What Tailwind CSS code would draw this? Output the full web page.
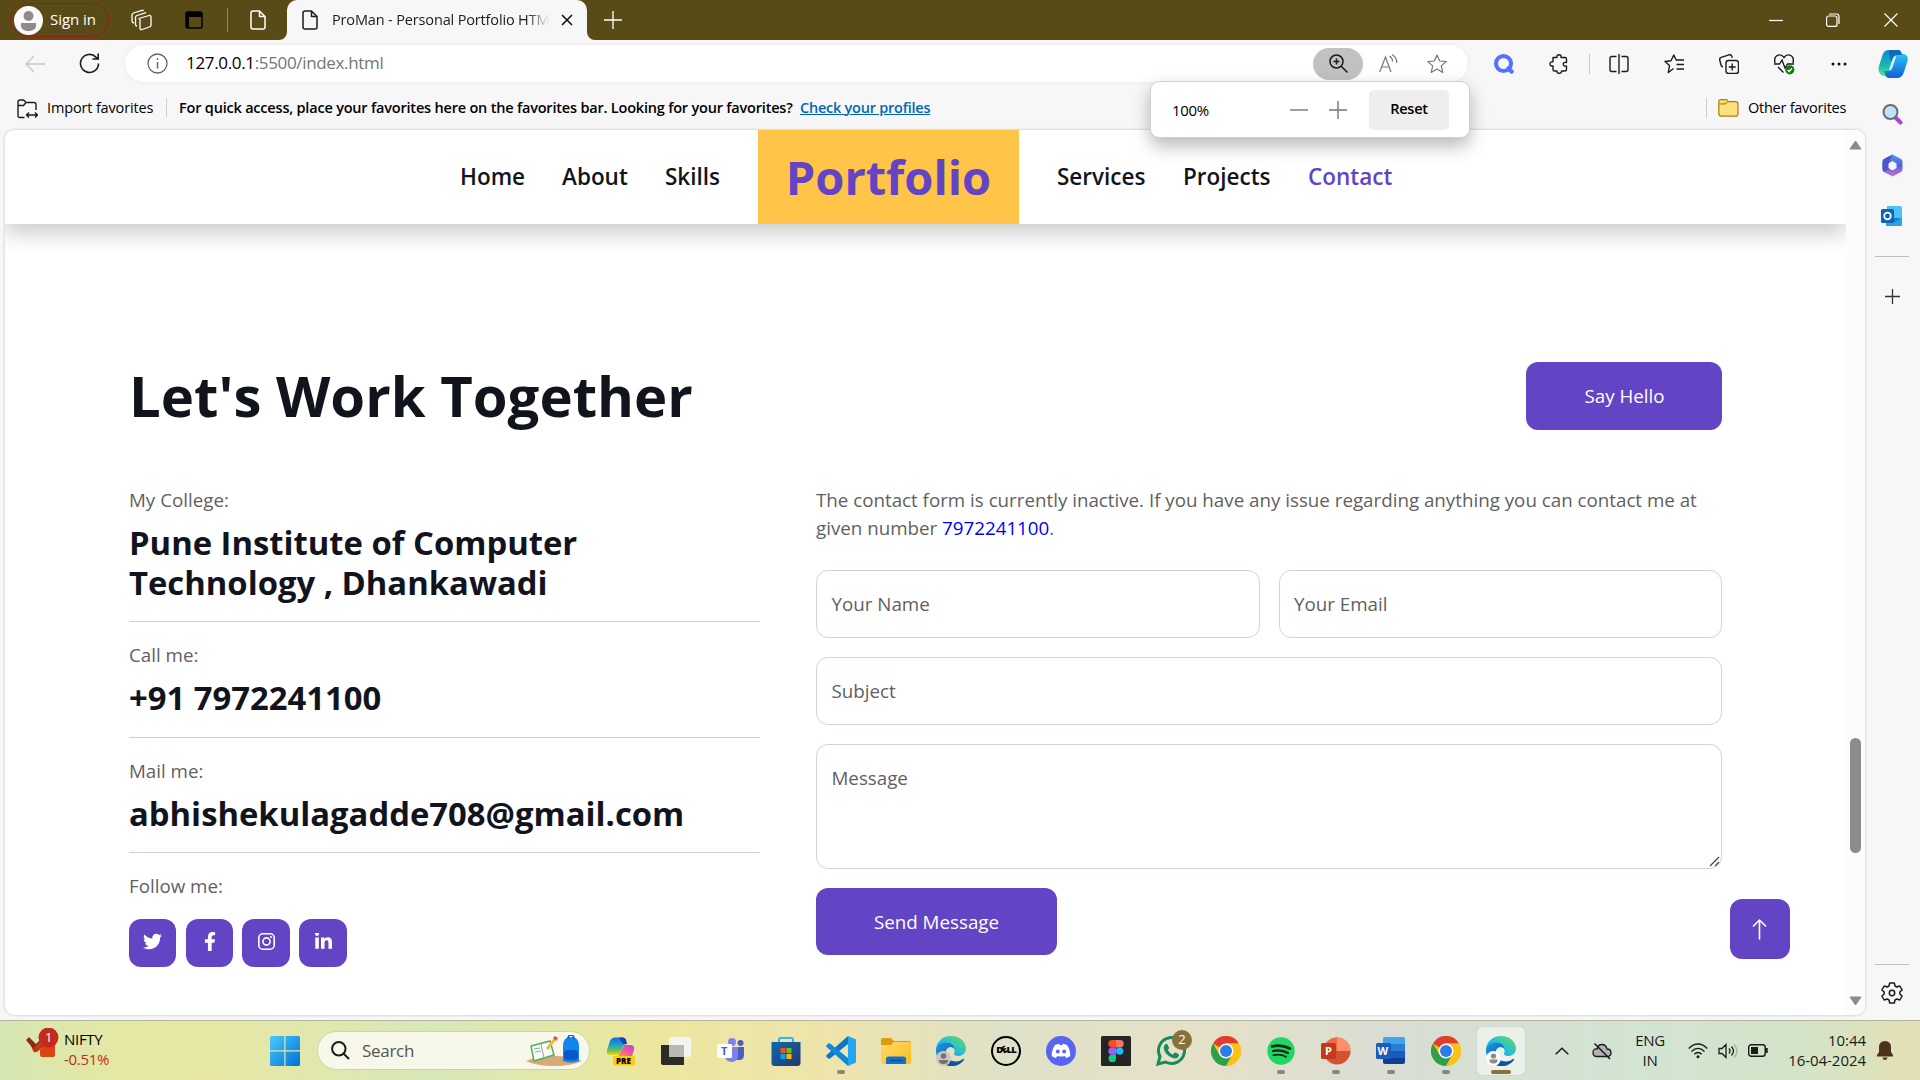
<!DOCTYPE html>
<html lang="en">
<head>
<meta charset="utf-8">
<title>ProMan - Personal Portfolio</title>
<script src="https://cdn.jsdelivr.net/npm/@tailwindcss/browser@4"></script>
</head>
<body class="h-[1080px] w-[1920px] overflow-hidden bg-[#f7f7f7] font-['Open_Sans','Noto_Sans',sans-serif] text-black">
<svg class="absolute size-0">
  <defs>
    <linearGradient id="win" x1="0" y1="0" x2="30" y2="30" gradientUnits="userSpaceOnUse"><stop offset="0" stop-color="#46ccfb"/><stop offset="1" stop-color="#0070d6"/></linearGradient>
    <linearGradient id="pilotA" x1="0" y1="0" x2="0" y2="1"><stop offset="0" stop-color="#1769dc"/><stop offset=".45" stop-color="#1ba6c4"/><stop offset=".75" stop-color="#72c34a"/><stop offset="1" stop-color="#f0d51f"/></linearGradient>
    <linearGradient id="pilotB" x1="1" y1="0" x2="0" y2="1"><stop offset="0" stop-color="#a24bf0"/><stop offset=".5" stop-color="#f0589a"/><stop offset="1" stop-color="#ff9a4c"/></linearGradient>
    <linearGradient id="copA" x1="0" y1="0" x2="0" y2="1"><stop offset="0" stop-color="#1686cf"/><stop offset=".6" stop-color="#16b9b4"/><stop offset="1" stop-color="#5ce08a"/></linearGradient>
    <linearGradient id="copB" x1="0" y1="0" x2="0" y2="1"><stop offset="0" stop-color="#27c3f5"/><stop offset="1" stop-color="#1260d8"/></linearGradient>
    <linearGradient id="edgeTop" x1="0" y1="1" x2="1" y2="0"><stop offset="0" stop-color="#1390dd"/><stop offset=".5" stop-color="#28bfd8"/><stop offset="1" stop-color="#63e04c"/></linearGradient>
    <linearGradient id="edgeLow" x1="0" y1="0" x2="1" y2="1"><stop offset="0" stop-color="#1b9be2"/><stop offset="1" stop-color="#0c4c9c"/></linearGradient>
    <linearGradient id="store" x1="0" y1="0" x2="1" y2="1"><stop offset="0" stop-color="#0d69b4"/><stop offset="1" stop-color="#243a68"/></linearGradient>
    <linearGradient id="folder" x1="0" y1="0" x2="1" y2="1"><stop offset="0" stop-color="#ffdc6b"/><stop offset="1" stop-color="#fbbb1c"/></linearGradient>
    <linearGradient id="m365" x1="0" y1="0" x2="0" y2="1"><stop offset="0" stop-color="#4a9df0"/><stop offset=".5" stop-color="#5a5fd8"/><stop offset="1" stop-color="#c278d8"/></linearGradient>
    <symbol id="chrome" viewBox="0 0 30 30">
      <circle cx="15" cy="15" r="15" fill="#fbc116"/>
      <path d="M15 15 2 7.5A15 15 0 0 1 28 7.5H15z" fill="#e33b2e"/>
      <path d="M2 7.5A15 15 0 0 0 15 30l6.500-11.200L15 15 8.500 18.800z" fill="#2da04e"/>
      <path d="M28 7.500H15v7.500l6.500 3.800L15 30A15 15 0 0 0 28 7.500z" fill="#fbc116"/>
      <circle cx="15" cy="15" r="7.500" fill="#fff"/><circle cx="15" cy="15" r="6" fill="#2d7bea"/>
    </symbol>
    <symbol id="edge" viewBox="0 0 30 30">
      <path d="M0 15C0 6 6.500 0 15 0c9 0 15 6 15 12.500C30 17 26.500 20 22.500 20c-3.500 0-5-1.500-4.200-3.200.8-1.700.5-5.800-4.300-5.800C8 11 0 17 0 15z" fill="url(#edgeTop)"/>
      <path d="M.1 13.500C1 9.500 5 6.500 10 6.500c5 0 8.500 3 8.500 7 0-1.500-2-3-4.500-2.500-4 .9-6 6-3.500 11 2 4 6.500 6 10 7A15 15 0 0 1 .1 13.500z" fill="url(#edgeLow)"/>
      <path d="M10 15c-1 6 3.500 10.500 10 10.500 3 0 5.500-1.500 7-2.500.8-.5 1.300.2.900.9C25.500 27.600 20.500 30 15.500 30 7 29 5 20 10 15z" fill="#0f549f"/>
    </symbol>
    <symbol id="page" viewBox="0 0 16 20"><path d="M3 1h6.500L15 6.500V17a2 2 0 0 1-2 2H3a2 2 0 0 1-2-2V3a2 2 0 0 1 2-2zM9.500 1v5.500H15" fill="none" stroke="currentColor" stroke-width="1.500" stroke-linejoin="round"/></symbol>
  </defs>
</svg>

<!-- Title bar -->
<header class="flex h-10 items-center bg-[#594b18] text-white">
  <div class="ml-2.5 flex h-[34px] w-[99px] items-center gap-[7px] rounded-full border border-[#9c1b12] pl-[3px] text-[15px]">
    <svg class="size-[29px] shrink-0" viewBox="0 0 29 29"><circle cx="14.500" cy="14.500" r="14.500" fill="#fafafa"/><circle cx="14.500" cy="10" r="5" fill="#8d8c8b"/><path d="M7 17h15c1 6-3 8-7.500 8S6 23 7 17z" fill="#8d8c8b"/></svg>
    <span class="-mt-px whitespace-nowrap tracking-[-0.05px]">Sign in</span>
  </div>
  <svg class="ml-[22px] size-[22px]" viewBox="0 0 22 22" fill="none" stroke="#fff" stroke-width="1.300" stroke-linejoin="round"><path d="M8 9.500 18 6.500q2-.4 2 1.500v8q0 1.500-1.500 2L11 20.500q-2 .5-2-1.500v-8zM6 17q-1.500 0-1.500-2V8.500q0-1.500 1.500-2l9-2.800M3 14q-2-.5-2-2V6q0-1.500 1.500-2L11 1.300q1-.2 1.500.5"/></svg>
  <svg class="ml-[32px] h-[18px] w-[18px]" viewBox="0 0 18 18"><rect x="1" y="1" width="16" height="16" rx="2" fill="none" stroke="#000" stroke-width="1.500"/><path d="M1 1h16v5H1zM1 1h3v16H1z" fill="#000"/></svg>
  <div class="ml-6 h-6 w-px bg-[#94895f]"></div>
  <svg class="ml-[22px] h-5 w-4" viewBox="0 0 16 20"><use href="#page"/></svg>
  <div class="relative ml-[21px] flex h-10 w-[300px] items-center rounded-t-[10px] bg-[#f7f7f7] pl-[15px] text-[14.500px] text-[#1b1b1b]">
    <svg class="h-5 w-4" viewBox="0 0 16 20"><use href="#page"/></svg>
    <span class="-mt-px ml-[14px] w-[217px] overflow-hidden bg-linear-to-r from-[#1b1b1b] from-[90%] to-transparent bg-clip-text whitespace-nowrap tracking-[-0.15px] text-transparent">ProMan - Personal Portfolio HTML</span>
    <svg class="ml-[12px] size-3" viewBox="0 0 12 12" stroke="#111" stroke-width="1.600"><path d="m1 1 10 10M11 1 1 11"/></svg>
    <svg class="absolute bottom-0 -left-2 size-2" viewBox="0 0 8 8"><path d="M8 0v8H0a8 8 0 0 0 8-8" fill="#f7f7f7"/></svg>
    <svg class="absolute -right-2 bottom-0 size-2" viewBox="0 0 8 8"><path d="M0 0v8h8a8 8 0 0 1-8-8" fill="#f7f7f7"/></svg>
  </div>
  <svg class="ml-[17px] size-[18px]" viewBox="0 0 18 18" stroke="#fff" stroke-width="1.300"><path d="M9 0v18M0 9h18"/></svg>
  <div class="ml-auto flex items-center pr-[22px]">
    <svg class="size-[14px]" viewBox="0 0 14 14" stroke="#fff" stroke-width="1.200"><path d="M0 7.500h14"/></svg>
    <svg class="ml-[43px] size-[14px]" viewBox="0 0 14 14" fill="none" stroke="#fff" stroke-width="1.200"><rect x=".6" y="3" width="10.400" height="10.400" rx="2"/><path d="M3 1h7.500Q13 1 13 3.500V11"/></svg>
    <svg class="ml-[44px] size-[14px]" viewBox="0 0 14 14" stroke="#fff" stroke-width="1.200"><path d="m.5.500 13 13M13.500.500l-13 13"/></svg>
  </div>
</header>

<div class="flex h-[980px]">
  <div class="flex w-[1866px] flex-col">
    <!-- Address row -->
    <div class="flex h-[47px] items-center">
      <svg class="ml-[25px] h-[18px] w-5" viewBox="0 0 20 18" fill="none" stroke="#c9c9c9" stroke-width="1.400"><path d="M20 9H1M9 1 1 9l8 8"/></svg>
      <svg class="ml-[34px] size-[21px]" viewBox="0 0 21 21" fill="none" stroke="#1b1b1b" stroke-width="1.600"><path d="M19.500 10.500a9 9 0 1 1-2.600-6.400L19 6M19.200.500V6H13.500"/></svg>
      <div class="ml-[25px] flex h-[37px] w-[1343px] items-center rounded-full bg-white pl-[22px] shadow-[0_0_4px_rgba(0,0,0,0.07)]">
        <svg class="size-[21px]" viewBox="0 0 21 21" fill="none" stroke="#666" stroke-width="1.300"><circle cx="10.500" cy="10.500" r="9.500"/><path d="M10.500 9v6.500M10.500 5.200v1.800" stroke-width="1.500"/></svg>
        <span class="-mt-px ml-[18px] w-[500px] text-[17px] tracking-[-0.34px] text-[#757575]"><span class="text-black">127.0.0.1</span>:5500/index.html</span>
        <div class="mr-[21px] ml-auto flex items-center">
          <div class="flex h-8 w-[50px] items-center justify-center rounded-full bg-[#c1c1c1]"><svg class="size-[19px]" viewBox="0 0 19 19" fill="none" stroke="#1b1b1b" stroke-width="1.500"><circle cx="7.500" cy="7.500" r="6.500"/><path d="m12 12 6.500 6.500M4.500 7.500h6M7.500 4.500v6"/></svg></div>
          <svg class="ml-4 h-[19px] w-[19px]" viewBox="0 0 19 19" fill="none" stroke="#767676" stroke-width="1.200"><path d="m.7 18 5.800-15L12 18M2.700 13H10M10.500 2q3 2 3 5.500M13 .5q5 3 4.800 8.500"/></svg>
          <svg class="ml-[29px] size-5" viewBox="0 0 20 20" fill="none" stroke="#767676" stroke-width="1.200" stroke-linejoin="round"><path d="m10 1 2.700 6 6.500.6-4.900 4.300 1.500 6.500L10 15l-5.800 3.400 1.500-6.500L.8 7.600l6.500-.6z"/></svg>
        </div>
      </div>
      <svg class="ml-[26px] size-5" viewBox="0 0 20 20" fill="none" stroke="#5271ff"><circle cx="9.500" cy="9.500" r="7.500" stroke-width="4"/><path d="m14.500 14.500 3 3" stroke-width="4.500" stroke-linecap="round"/></svg>
      <svg class="ml-[35px] size-5" viewBox="0 0 20 20" fill="none" stroke="#1b1b1b" stroke-width="1.400" stroke-linejoin="round"><path d="M4 3.500h4Q7.500.8 10 .8t2 2.700h4q1.500 0 1.500 1.500v3.500q-3.200-.6-3.200 1.700T17.500 12v3.500q0 1.500-1.500 1.500h-3.500q.2 2.300-2.300 2.300T8 17H5.500Q4 17 4 15.500V12q-3 .3-3-2t3-2.200z"/></svg>
      <div class="ml-[20px] h-5 w-px bg-[#c8c8c8]"></div>
      <svg class="ml-[19px] h-5 w-5" viewBox="0 0 20 20" fill="none" stroke="#1b1b1b" stroke-width="1.400"><path d="M10 0v20M7.500 2.500H3q-2 0-2 2v11q0 2 2 2h4.500M12.500 2.500H17q2 0 2 2v11q0 2-2 2h-4.500"/></svg>
      <svg class="ml-[35px] h-5 w-5" viewBox="0 0 20 20" fill="none" stroke="#1b1b1b" stroke-width="1.400" stroke-linejoin="round"><path d="M9.500 14.500 4.300 18.500l1.200-7L1 7.500l6-.7L9.800 1l2.300 5H20M12.500 10.500H20M12.500 15H20"/></svg>
      <svg class="ml-[35px] size-5" viewBox="0 0 20 20" fill="none" stroke="#1b1b1b" stroke-width="1.400" stroke-linejoin="round"><rect x="7" y="6.500" width="12.500" height="13" rx="2.500"/><path d="M13.200 9.500v7M9.700 13h7M4 13Q2.300 12.500 2 11L.7 6q-.3-2 1.500-2.600L10 .8q2-.5 2.700 1.200l.6 1.800"/></svg>
      <svg class="ml-[35px] size-5 overflow-visible" viewBox="0 0 20 20" fill="none" stroke="#1b1b1b" stroke-width="1.400"><path d="M1 9Q-.5 3 4 1.200 7.500 0 10 3.500 12.500 0 16 1.200 20.500 3 19 9M0 10h5.500L8 6l3 8 2.500-4H20M4 13l5.500 5.500"/><circle cx="15.800" cy="15.800" r="4.600" fill="#107c10" stroke="none"/><path d="m13.700 16 1.500 1.500 2.700-3" stroke="#fff"/></svg>
      <svg class="ml-[37px] h-1 w-4" viewBox="0 0 16 4" fill="#111"><circle cx="2" cy="2" r="1.500"/><circle cx="8" cy="2" r="1.500"/><circle cx="14" cy="2" r="1.500"/></svg>
    </div>
    <!-- Favorites bar -->
    <div class="flex h-[43px] items-center pb-[2px] text-[14.500px]">
      <svg class="mt-0.5 ml-[17px] h-[20px] w-[21px]" viewBox="0 0 21 20" fill="none" stroke="#1b1b1b" stroke-width="1.400"><path d="M7.500 18.500H3q-2 0-2-2V3q0-2 2-2h3.500l2.500 2.500H17q2 0 2 2V11M1 6.500h5.500L9 3.500M9.500 16h11M12 13.500 9.500 16l2.500 2.500M18 13.500l2.500 2.500-2.500 2.500"/></svg>
      <span class="ml-[9px] w-[119px] whitespace-nowrap tracking-[-0.15px]">Import favorites</span>
      <div class="mr-[12px] h-[19px] w-px bg-[#cfcfcf]"></div>
      <span class="w-[621px] text-[14.500px] font-semibold whitespace-nowrap tracking-[-0.2px]">For quick access, place your favorites here on the favorites bar. Looking for your favorites?</span>
      <span class="whitespace-nowrap tracking-[-0.24px] font-semibold text-[#0067b8] underline">Check your profiles</span>
      <div class="mr-[19px] ml-auto flex items-center">
        <div class="h-5 w-px bg-[#cfcfcf]"></div>
        <svg class="ml-[11px] h-[18px] w-[21px]" viewBox="0 0 21 18"><path d="M3 .7h5q1.500 0 2 1.500l.3.500H17.500q2.500 0 2.500 2.500v9.500q0 2.500-2.500 2.500h-14Q.8 17.200.8 14.500V3Q.8.700 3 .7z" fill="#ffdf7f" stroke="#a9801b" stroke-width="1.200"/><path d="M1 5h6.500L10 2.500" fill="#f0bd2c" stroke="#a9801b"/></svg>
        <span class="ml-[9px] w-[99px] whitespace-nowrap tracking-[-0.25px]">Other favorites</span>
      </div>
    </div>

    <!-- Page viewport -->
    <div class="ml-[5px] flex h-[885px] w-[1860px] overflow-hidden rounded-[9px] bg-white shadow-[0_0_3px_rgba(0,0,0,0.25)]">
      <main class="relative h-full w-[1841px] overflow-hidden">
        <nav class="flex h-[94px] items-center bg-white text-[22.500px] font-semibold text-[#12141d] shadow-[0_10px_20px_rgba(0,0,0,0.2)]">
          <a class="ml-[454px] w-[103px] pl-px">Home</a><a class="w-[103px]">About</a><a class="w-[93px]">Skills</a>
          <a class="flex h-full w-[261px] items-center justify-center bg-[#ffc448] text-[47px] font-bold text-[#6244c5]">Portfolio</a>
          <a class="ml-[38px] w-[126px]">Services</a><a class="w-[125px]">Projects</a><a class="text-[#6244c5]">Contact</a>
        </nav>
        <section class="pt-[138px] pr-[124px] pl-[124px] text-[18.750px] text-[#5f5f63]">
          <div class="flex h-[68px] items-center justify-between">
            <h2 class="-mt-[2px] text-[56.250px] leading-[68px] font-bold text-[#12141d]">Let's Work Together</h2>
            <a class="flex h-full w-[196px] items-center justify-center rounded-[12px] bg-[#6244c5] pl-px font-medium text-white">Say Hello</a>
          </div>
          <div class="mt-[56px] flex justify-between leading-7">
            <div class="w-[631px]">
              <div class="h-[136px] border-b border-[#cfd0d6]"><p>My College:</p><h3 class="mt-[9px] text-[32.800px] leading-10 font-bold text-[#12141d]">Pune Institute of Computer<br>Technology , Dhankawadi</h3></div>
              <div class="h-[116px] border-b border-[#cfd0d6] pt-[19px]"><p>Call me:</p><h3 class="mt-[9px] text-[32.800px] leading-10 font-bold text-[#12141d]">+91 7972241100</h3></div>
              <div class="h-[115px] border-b border-[#cfd0d6] pt-[19px]"><p>Mail me:</p><h3 class="mt-[9px] text-[32.800px] leading-10 font-bold text-[#12141d]">abhishekulagadde708@gmail.com</h3></div>
              <p class="pt-[19px]">Follow me:</p>
              <div class="mt-[19px] flex gap-[9px] text-white">
                <a class="flex h-12 w-[47px] items-center justify-center rounded-[12px] bg-[#6244c5] pb-[3px]"><svg class="size-[19px]" viewBox="0 0 512 512" fill="currentColor"><path d="M459.400 151.700c.3 4.500.3 9.100.3 13.600 0 138.700-105.600 298.600-298.600 298.600-59.500 0-114.700-17.200-161.100-47.100 8.400 1 16.600 1.300 25.300 1.300 49.100 0 94.200-16.600 130.300-44.800-46.100-1-84.800-31.200-98.100-72.800 6.500 1 13 1.600 19.800 1.600 9.400 0 18.800-1.300 27.600-3.600-48.100-9.700-84.100-52-84.100-103v-1.300c14 7.800 30.200 12.700 47.400 13.300-28.300-18.800-46.800-51-46.800-87.400 0-19.500 5.200-37.400 14.300-53 51.700 63.700 129.300 105.300 216.400 109.800-1.600-7.800-2.600-15.900-2.600-24 0-57.800 46.800-104.900 104.900-104.900 30.200 0 57.500 12.700 76.700 33.100 23.700-4.500 46.500-13.300 66.600-25.300-7.800 24.400-24.400 44.800-46.100 57.800 21.100-2.300 41.600-8.100 60.400-16.200-14.300 20.800-32.200 39.300-52.600 54.300z"/></svg></a>
                <a class="ml-px flex h-12 w-[47px] items-center justify-center rounded-[12px] bg-[#6244c5] pb-[3px]"><svg class="h-[19px] w-[12px]" viewBox="0 0 320 512" fill="currentColor"><path d="m279 288 14.300-92.700h-89v-60c0-25.400 12.400-50.200 52.200-50.200H297V6.300S260.400 0 225.400 0C152 0 104.300 44.400 104.300 124.700v70.600H22.900V288h81.400v224h100.100V288z"/></svg></a>
                <a class="flex h-12 w-12 items-center justify-center rounded-[12px] bg-[#6244c5] pb-[3px]"><svg class="size-[17px]" viewBox="0 0 17 17" fill="none" stroke="currentColor" stroke-width="1.600"><rect x=".8" y=".8" width="15.400" height="15.400" rx="4"/><circle cx="8.500" cy="8.500" r="3.600"/><circle cx="13" cy="4" r="1" fill="currentColor" stroke="none"/></svg></a>
                <a class="flex h-12 w-12 items-center justify-center rounded-[12px] bg-[#6244c5] pb-[3px]"><svg class="size-[17px]" viewBox="0 0 448 448" fill="currentColor"><path d="M100.300 416H7.400V116.900h92.900zM53.800 76.100C24.100 76.100 0 51.500 0 21.800a53.800 53.800 0 0 1 107.600 0c0 29.700-24.100 54.300-53.800 54.300zM447.900 416h-92.700V270.400c0-34.700-.7-79.200-48.300-79.200-48.300 0-55.700 37.700-55.700 76.700V416h-92.800V116.900h89.100v40.800h1.300c12.400-23.500 42.700-48.300 87.900-48.300 94 0 111.300 61.900 111.300 142.300V416z"/></svg></a>
              </div>
            </div>
            <div class="w-[906px]">
              <p class="whitespace-nowrap">The contact form is currently inactive. If you have any issue regarding anything you can contact me at<br>given number <a class="text-[#0000ee]">7972241100</a>.</p>
              <div class="mt-[28px] grid grid-cols-2 gap-x-[19px] gap-y-[19px]">
                <div class="flex h-[68px] items-center rounded-[12px] border border-[#cfd3dc] px-[14.500px]">Your Name</div>
                <div class="flex h-[68px] items-center rounded-[12px] border border-[#cfd3dc] px-[14.500px]">Your Email</div>
                <div class="col-span-2 flex h-[68px] items-center rounded-[12px] border border-[#cfd3dc] px-[14.500px]">Subject</div>
                <div class="relative col-span-2 h-[125px] rounded-[12px] border border-[#cfd3dc] px-[14.500px] pt-[19px]">Message<svg class="absolute right-px bottom-px size-[11px]" viewBox="0 0 11 11" stroke="#444" stroke-width="1.200"><path d="m1 10 9-9M6 10l4-4"/></svg></div>
              </div>
              <a class="mt-[19px] flex h-[67px] w-[241px] items-center justify-center rounded-[12px] bg-[#6244c5] font-medium text-white">Send Message</a>
            </div>
          </div>
        </section>
        <a class="absolute top-[769px] left-[1725px] flex size-[60px] items-center justify-center rounded-[12px] bg-[#6244c5] pr-px"><svg class="h-[21px] w-[15px]" viewBox="0 0 15 21" fill="none" stroke="#fff" stroke-width="1.600" stroke-linecap="round" stroke-linejoin="round"><path d="M7.500 20V1M1.500 7l6-6 6 6"/></svg></a>
      </main>
      <div class="flex w-[19px] flex-col items-center bg-[#fcfcfc] pt-[10px] pr-px pb-[9px]">
        <svg class="h-[10px] w-[13px]" viewBox="0 0 13 10"><path d="M6.500 1 12 9H1z" fill="#8b8b8b" stroke="#8b8b8b" stroke-linejoin="round"/></svg>
        <div class="mt-[588px] h-[115px] w-[11px] rounded-full bg-[#8b8b8b]"></div>
        <svg class="mt-auto h-[10px] w-[13px]" viewBox="0 0 13 10"><path d="M6.500 9 12 1H1z" fill="#8b8b8b" stroke="#8b8b8b" stroke-linejoin="round"/></svg>
      </div>
    </div>
  </div>

  <!-- Edge sidebar -->
  <aside class="flex w-[54px] flex-col items-center pt-[9px] pr-[2px]">
    <svg class="ml-[2px] size-[30px]" viewBox="0 0 30 30"><path d="M11 1h9q2.500 0 3.500 3l1 4h-5q-3 0-4 3l-4 13q-1 3-4 3H5Q-1 24 1 17L4.500 6Q6 1 11 1z" fill="url(#copA)"/><path d="M19 29h-8q-3 0-4-4l-.7-3H9q3 0 4-3l4-11q1-3 4-3h4q6 1 4.500 7L26 23q-2 6-7 6z" fill="url(#copB)"/><path d="M11 1h9q2.500 0 3.500 3l.5 2h-4.500q-3 0-4 3L14 13q-3-4-3-12z" fill="#0f5fb8" opacity=".8"/><path d="m11.500 19 3-9q1-3.500 4-3.500l-4 12q-.8 2.500-3 3.500z" fill="#e9fbff" opacity=".85"/></svg>
    <svg class="mt-[25px] size-[21px]" viewBox="0 0 21 21"><path d="m13 13 5.500 5.500" stroke="#b53de0" stroke-width="4" stroke-linecap="round"/><circle cx="8.500" cy="8" r="7" fill="#bfe3fa" stroke="#6c6c70" stroke-width="2"/></svg>
    <svg class="mt-[29px] size-[23px]" viewBox="0 0 23 23"><path d="M11.500.500 20 5q1.500 1 1.500 3v7q0 2-1.500 3l-8.500 4.500L3 18q-1.500-1-1.500-3V8Q1.500 6 3 5z" fill="url(#m365)"/><path d="M11.500.500 3 5Q1.500 6 1.500 8v7q0 2 1.500 3l5-3V8z" fill="#4b56c8"/><path d="m11.500 7 4 2.500v4.500l-4 2.500-4-2.500V9.500z" fill="#f5f5fb"/></svg>
    <svg class="mt-[28px] size-[22px]" viewBox="0 0 22 22"><path d="M6 1h13q2 0 2 2v16q0 2-2 2H6z" fill="#4cc2f5"/><path d="M5 13h16v6q0 2-2 2H5z" fill="#1683d8"/><path d="m5 13 8 5 8-6v8l-1 1H5z" fill="#2ba2ea"/><rect x="0" y="4" width="13" height="14" rx="1.500" fill="#0f63b8"/><circle cx="6.500" cy="11" r="3.300" fill="none" stroke="#fff" stroke-width="1.800"/></svg>
    <div class="mt-[29px] h-px w-[34px] bg-[#bdbdbd]"></div>
    <svg class="mt-[32px] size-[15px]" viewBox="0 0 15 15" stroke="#333" stroke-width="1.300"><path d="M7.500 0v15M0 7.500h15"/></svg>
    <div class="mt-auto h-px w-[34px] bg-[#bdbdbd]"></div>
    <svg class="mt-[17px] mb-[16px] size-[22px]" viewBox="0 0 22 22" fill="none" stroke="#1b1b1b" stroke-width="1.500" stroke-linejoin="round"><path d="m8.700 1h4.600l.7 3 1.800 1 3-1 2.300 4-2.300 2v2l2.300 2-2.300 4-3-1-1.800 1-.7 3H8.700L8 18l-1.800-1-3 1-2.300-4 2.300-2v-2L.9 8l2.300-4 3 1L8 4z"/><circle cx="11" cy="11" r="2.700"/></svg>
  </aside>
</div>

<!-- Zoom popup -->
<div class="absolute top-[81px] left-[1150px] flex h-[57px] w-[320px] items-center rounded-[9px] border border-[#cfcfcf] bg-white text-[14px] shadow-[0_8px_18px_rgba(0,0,0,0.28)]">
  <span class="mt-px ml-[21px] w-[118px] text-[15px] tracking-[-0.3px]">100%</span>
  <svg class="h-[18px] w-[18px]" viewBox="0 0 18 18" stroke="#767676" stroke-width="1.400"><path d="M0 9h18"/></svg>
  <svg class="ml-[21px] h-[18px] w-[18px]" viewBox="0 0 18 18" stroke="#767676" stroke-width="1.400"><path d="M0 9h18M9 0v18"/></svg>
  <div class="ml-[22px] flex h-10 w-20 items-center justify-center rounded-[5px] bg-[#eee] pb-px text-[14.500px] font-semibold tracking-[-0.3px]">Reset</div>
</div>

<!-- Taskbar -->
<footer class="relative flex h-[60px] items-center border-t border-[#b3b49c] bg-[linear-gradient(90deg,#d6e6b4_0px,#e4e8a4_110px,#e8e7a4_210px,#d8e8b8_430px,#ece79e_650px,#eee4ac_830px,#dfe1c8_1000px,#e6e1c8_1190px,#d9ddd4_1400px,#d2e4d2_1640px,#d4e4c9_1800px,#e4e0b4_1920px)]">
  <div class="relative ml-[25px] h-full w-[245px]">
    <svg class="absolute top-[7px] left-0 h-[30px] w-[34px]" viewBox="0 0 34 30"><path d="m5 15 6 3 8-9 11 2v16q0 2-2 2H17q-2 0-2-2v-5l3-4-7 6q-2 1-3-1z" fill="#d94510"/><path d="m1 12 3-3 7 7 4-4 3 6-7 6z" fill="#8c2a16"/><path d="m9 20 7-8 4 5-8 7z" fill="#c23a12"/><circle cx="23.500" cy="9.500" r="10" fill="#c42b1c"/></svg>
    <span class="absolute top-[7px] left-[20px] text-[13px] text-white">1</span>
    <div class="absolute top-[8px] left-[39px] text-[15px] leading-5 tracking-[-0.3px]"><p>NIFTY</p><p class="text-[#c42b1c]">-0.51%</p></div>
  </div>
  <svg class="size-[30px]" viewBox="0 0 30 30" fill="url(#win)"><path d="M0 1.500Q0 0 1.500 0h12.800v14.300H0zM15.500 0h13Q30 0 30 1.500v12.800H15.500zM0 15.500h14.300V30H1.500Q0 30 0 28.500zM15.500 15.500H30v13q0 1.500-1.500 1.500h-13z"/></svg>
  <div class="ml-[17px] flex h-[39px] w-[273px] items-center rounded-full border border-[#d0d3a8] bg-[#f7f8ea] pl-[13px] text-[17px] text-[#555]">
    <svg class="size-[19px]" viewBox="0 0 19 19" fill="none" stroke="#1b1b1b" stroke-width="2"><circle cx="7.800" cy="7.800" r="6.700"/><path d="m12.500 12.500 5.500 5.500"/></svg>
    <span class="ml-3 tracking-[-0.3px]">Search</span>
    <svg class="mr-1.5 ml-auto h-[32px] w-[57px]" viewBox="0 0 57 32"><path d="M0 26q12-5 28-5t28 5q-10 5-28 5T0 26z" fill="#d9a878"/><path d="M5 11 24 6l4 14-20 6z" fill="#f8faf5" stroke="#4fae62" stroke-width="1.500"/><path d="m15 9 3 14M8 14l6-1M9 17l6-1" stroke="#8ba6b8" fill="none"/><path d="m20 13 8-10 2 2-8 10z" fill="#f5b636"/><path d="m27 3 2-2 3 2-2 3z" fill="#e8503d"/><path d="M37 11q0-9 8-9t8 9v15q-8 3-16 0z" fill="#1285f0"/><rect x="38" y="15" width="14" height="10" rx="4" fill="#0957c8"/><path d="M42 4q0-4 3-4t3 4" fill="none" stroke="#0c58be" stroke-width="1.500"/></svg>
  </div>
  <div class="ml-[16px] flex items-center gap-[25px]">
    <div class="relative size-[30px]"><svg class="size-[30px]" viewBox="0 0 30 30"><path d="M9 1.500h8q2.500 0 3 2.500l1 4q-3 0-4.500 3L13 19H3q-3-1-2-5L4 5q1.500-3.500 5-3.500z" fill="url(#pilotA)"/><path d="M13 1.500h4q2.500 0 3 2.500l1 4h-4z" fill="#1c3fc4"/><path d="M18 9h7q4 .5 3 4.500l-2 7H12z" fill="url(#pilotB)"/><rect x="7" y="20" width="22" height="9.500" rx="2" fill="#ffc814"/></svg><span class="absolute top-[20px] left-[10px] text-[8px] leading-[10px] font-extrabold">PRE</span></div>
    <svg class="size-[30px]" viewBox="0 0 30 30"><path d="M0 9h23v20H2q-2 0-2-2z" fill="#2b2b2b"/><path d="M8 1h20q2 0 2 2v16q0 2-2 2H8z" fill="#f4f4f4" opacity=".92"/><path d="M8 9h15v12H8z" fill="#b9b9b4"/></svg>
    <div class="relative size-[30px]"><svg class="size-[30px]" viewBox="0 0 30 30"><circle cx="16" cy="6" r="4" fill="#7b83eb"/><circle cx="24.500" cy="7" r="3" fill="#5059c9"/><path d="M19 11h9v8q0 5-5 5h-4z" fill="#5059c9"/><path d="M9 11h13v8q0 7-6.500 7T9 19z" fill="#7b83eb"/><rect x="1" y="8" width="15" height="14" rx="1" fill="#fbfbff"/></svg><span class="absolute top-[7px] left-[5px] text-[11px] leading-4 font-bold text-[#5059c9]">T</span></div>
    <svg class="size-[30px]" viewBox="0 0 30 30"><path d="M8 7V3.500Q8 2 9.500 2h11Q22 2 22 3.500V7" fill="none" stroke="#2fb5f2" stroke-width="2"/><path d="M.5 6h29v21q0 3-3 3h-23q-3 0-3-3z" fill="url(#store)"/><path d="M9.500 12h5v5h-5z" fill="#f25022"/><path d="M15.500 12h5v5h-5z" fill="#7fba00"/><path d="M9.500 18h5v5h-5z" fill="#00a4ef"/><path d="M15.500 18h5v5h-5z" fill="#ffb900"/></svg>
    <svg class="size-[30px]" viewBox="0 0 30 30"><path d="m22 0 8 3.500v23L22 30z" fill="#23a5f2"/><path d="M22 0v8L4 22.500Q3 23 2 22.300L.6 21q-1-1 0-2z" fill="#0f76c4"/><path d="M22 30v-8L4 7.500Q3 7 2 7.700L.6 9q-1 1 0 2z" fill="#1288dc"/></svg>
    <svg class="size-[30px]" viewBox="0 0 30 30"><path d="M0 4q0-2 2-2h8l3 3h15q2 0 2 2v4H0z" fill="#dd9c0c"/><path d="M0 9h10l3-3h15q2 0 2 2v18q0 2-2 2H2q-2 0-2-2z" fill="url(#folder)"/><path d="M5 28v-5q0-2.500 2.500-2.500h15q2.500 0 2.500 2.500v5z" fill="#1273ce"/><path d="M9 24.500h12" stroke="#0d4f96" stroke-width="1.500"/></svg>
    <svg class="size-[30px]" viewBox="0 0 30 30"><use href="#edge"/><circle cx="7.500" cy="22.500" r="7.500" fill="#c9c8c6"/><circle cx="7.500" cy="20" r="2.800" fill="#77726e"/><path d="M3 24h9q.5 4-4.500 4T3 24z" fill="#77726e"/></svg>
    <div class="flex size-[30px] items-center justify-center rounded-full border-2 border-black text-[9.500px] font-extrabold tracking-[-0.9px]">D<span class="-rotate-30">E</span>LL</div>
    <svg class="size-[30px]" viewBox="0 0 30 30"><circle cx="15" cy="15" r="15" fill="#5865f2"/><path d="M9 9q2-1 4-1.300l.7 1.200h2.600l.7-1.200Q19 8 21 9q3.500 5 3.300 11-2 1.500-4.300 2l-1.200-2q-3.800 1-7.600 0L10 22q-2.300-.5-4.300-2Q5.500 14 9 9z" fill="#fff"/><circle cx="11.800" cy="15.500" r="1.900" fill="#5865f2"/><circle cx="18.200" cy="15.500" r="1.900" fill="#5865f2"/></svg>
    <svg class="size-[30px]" viewBox="0 0 30 30"><rect width="30" height="30" rx="1.500" fill="#242424"/><path d="M15 4h-4a3.700 3.700 0 0 0 0 7.400h4z" fill="#f24e1e"/><path d="M15 4h4a3.700 3.700 0 0 1 0 7.400h-4z" fill="#ff7262"/><path d="M15 11.400h-4a3.700 3.700 0 0 0 0 7.400h4z" fill="#a259ff"/><circle cx="18.700" cy="15.100" r="3.700" fill="#1abcfe"/><path d="M15 18.800h-4a3.700 3.700 0 1 0 4 3.700z" fill="#0acf83"/></svg>
    <div class="relative size-[30px]"><svg class="size-[30px]" viewBox="0 0 30 30"><path d="M2 28l2-7.500A13 13 0 1 1 9.500 26z" fill="none" stroke="#188a5b" stroke-width="3"/><path d="M9 8.500q1.500-1.500 2.500 0l1.500 3q.3 1-1.200 2.500 2 3.500 5 4.700l1.500-1.700q.7-.7 1.700-.2l2.800 1.500q.7 2-1.300 3.400-2.500 1.800-7-.7Q9.500 18 8 13.500 7.300 10.500 9 8.500z" fill="#188a5b"/></svg><span class="absolute -top-1.5 -right-1.5 flex size-5 items-center justify-center rounded-full bg-[#87713c] text-[13px] text-white">2</span></div>
    <svg class="size-[30px]" viewBox="0 0 30 30"><use href="#chrome"/></svg>
    <svg class="size-[30px]" viewBox="0 0 30 30"><circle cx="15" cy="15" r="13.700" fill="#1ed760"/><path d="M6 10.500q9-2.500 18 2" stroke="#0c2815" stroke-width="2.600" fill="none" stroke-linecap="round"/><path d="M7 15q8-2 15 2" stroke="#0c2815" stroke-width="2.200" fill="none" stroke-linecap="round"/><path d="M7.500 19.200q7-1.500 12.500 1.600" stroke="#0c2815" stroke-width="1.800" fill="none" stroke-linecap="round"/></svg>
    <div class="relative size-[30px]"><svg class="size-[30px]" viewBox="0 0 30 30"><circle cx="16" cy="15" r="13.500" fill="#d35230"/><path d="M16 1.500A13.500 13.500 0 0 1 29.500 15H16z" fill="#ff8f6b"/><path d="M16 1.500V15H2.500A13.500 13.500 0 0 1 16 1.500z" fill="#ed6c47"/><rect x="0" y="7" width="15" height="16" rx="1.500" fill="#c03a1b"/></svg><span class="absolute top-[7px] left-[4px] text-[11px] leading-4 font-bold text-white">P</span></div>
    <div class="relative size-[30px]"><svg class="size-[30px]" viewBox="0 0 30 30"><path d="M7 3q0-2 2-2h18q2 0 2 2v5H7z" fill="#41a5ee"/><path d="M7 8h22v7H7z" fill="#2b7cd3"/><path d="M7 15h22v7H7z" fill="#185abd"/><path d="M7 22h22v4q0 2-2 2H9q-2 0-2-2z" fill="#103f91"/><rect x="0" y="7" width="15" height="16" rx="1.500" fill="#1b5cbe"/></svg><span class="absolute top-[7px] left-[1.500px] text-[11px] leading-4 font-bold text-white">W</span></div>
    <svg class="size-[30px]" viewBox="0 0 30 30"><use href="#chrome"/></svg>
    <div class="-mx-[9px] flex size-12 items-center justify-center rounded-[5px] bg-white/50 shadow-[0_0_1px_rgba(0,0,0,0.3)]"><svg class="size-[30px]" viewBox="0 0 30 30"><use href="#edge"/><circle cx="7.500" cy="22.500" r="7.500" fill="#fafafa"/><circle cx="7.500" cy="20" r="2.600" fill="#8d8c8b"/><path d="M3.500 23.500h8q.5 4-4 4t-4-4z" fill="#8d8c8b"/></svg></div>
  </div>
  <div class="absolute bottom-[6px] left-[837px] h-1 w-2 rounded-full bg-[#8a8565]"></div>
  <div class="absolute bottom-[6px] left-[1277px] h-1 w-2 rounded-full bg-[#858781]"></div>
  <div class="absolute bottom-[6px] left-[1332px] h-1 w-2 rounded-full bg-[#858781]"></div>
  <div class="absolute bottom-[6px] left-[1387px] h-1 w-2 rounded-full bg-[#858781]"></div>
  <div class="absolute bottom-[6px] left-[1442px] h-1 w-2 rounded-full bg-[#858781]"></div>
  <div class="absolute bottom-[6px] left-[1491px] h-1 w-5 rounded-full bg-[#87713c]"></div>
  <div class="mr-[27px] ml-auto flex items-center text-[15px] leading-5 text-[#1b1b1b]">
    <svg class="h-2 w-[14px]" viewBox="0 0 14 8" fill="none" stroke="#1b1b1b" stroke-width="1.500"><path d="m.7 7.300 6.300-6 6.300 6"/></svg>
    <svg class="ml-[23px] h-[18px] w-5" viewBox="0 0 20 18"><path d="M5 14.500q-4 0-4-4T5 7q1-4.500 5-4.500T15 7q4 0 4 3.700t-4 3.800z" fill="#b5b2b5" stroke="#1b1b1b" stroke-width="1.300"/><path d="m2.500 1.500 15.500 15.500" stroke="#1b1b1b" stroke-width="1.500"/></svg>
    <div class="-mt-px ml-[20px] w-[36px] text-center text-[15px] tracking-[-0.3px]">ENG<br>IN</div>
    <svg class="ml-[20px] h-[17px] w-5" viewBox="0 0 20 17" fill="none" stroke="#1b1b1b" stroke-width="1.300"><path d="M.7 6.500Q5 2 10 2t9.300 4.500M3.500 9.500Q6.500 6.300 10 6.300t6.500 3.200M6.300 12.300q3.700-3.700 7.400 0"/><circle cx="10" cy="14.700" r="1.500" fill="#1b1b1b" stroke="none"/></svg>
    <svg class="ml-[10px] h-[16px] w-5" viewBox="0 0 20 16" fill="none" stroke="#1b1b1b" stroke-width="1.300"><path d="M1 5.500h3L8 1.500v13L4 10.500H1zM11 5.500q2 2.500 0 5M13.500 3.500q4 4.500 0 9"/><path d="M16 1.500q6 6.500 0 13" opacity=".25"/></svg>
    <svg class="ml-[10px] h-[13px] w-5" viewBox="0 0 20 13"><rect x=".7" y=".7" width="16.500" height="11.600" rx="2.500" fill="none" stroke="#1b1b1b" stroke-width="1.400"/><rect x="3" y="3" width="7" height="7" fill="#1b1b1b"/><path d="M17.500 4h2.200v5h-2.200z" fill="#1b1b1b"/></svg>
    <div class="-mt-[2px] ml-[13px] w-[85px] text-right text-[15px] whitespace-nowrap tracking-[-0.04px]">10:44<br>16-04-2024</div>
    <svg class="ml-[11px] h-[19px] w-4" viewBox="0 0 16 19" fill="#4d3319"><path d="M8 0q6 0 6 6.500V11l2 3v1.500H0V14l2-3V6.500Q2 0 8 0zM5.500 16.500h5Q10 19 8 19t-2.500-2.500z"/></svg>
  </div>
</footer>
</body>
</html>
